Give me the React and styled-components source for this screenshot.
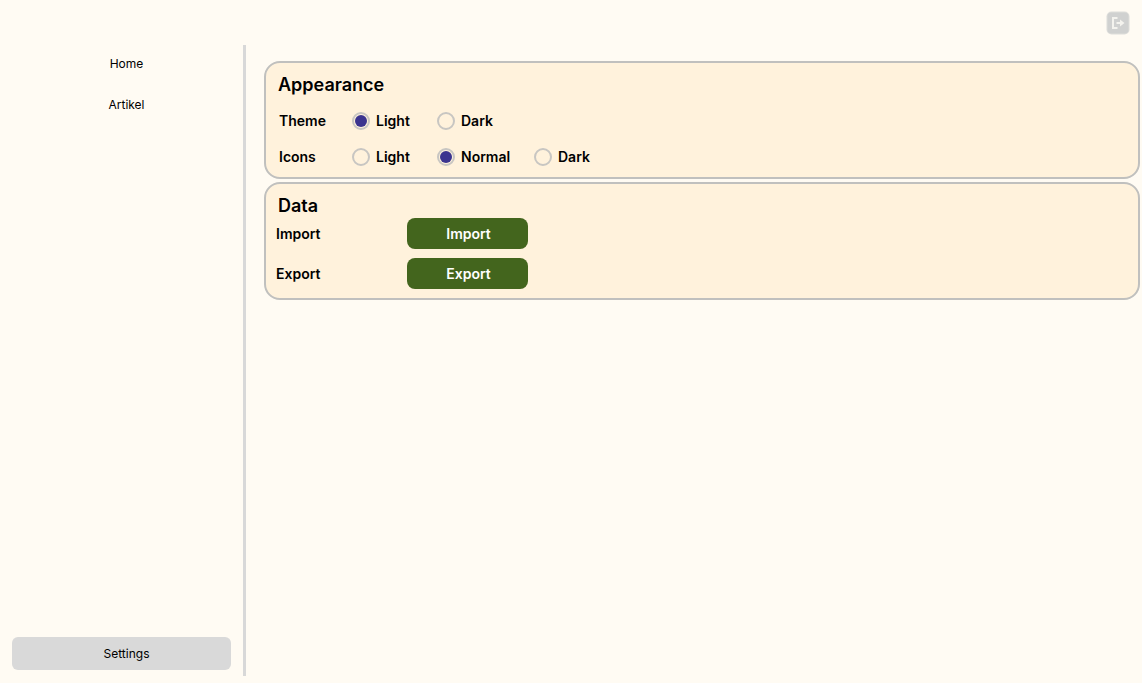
import React, { useState } from "react";
import styled, { createGlobalStyle } from "styled-components";

const GlobalStyle = createGlobalStyle`
  *, *::before, *::after { box-sizing: border-box; }
  body {
    margin: 0;
    background: #fffbf3;
    color: #000;
    font-family: Inter, "Liberation Sans", sans-serif;
  }
`;

const Page = styled.div`
  display: flex;
  flex-direction: column;
  min-height: 100vh;
  padding-bottom: 7px;
`;

const TopBar = styled.header`
  display: flex;
  justify-content: flex-end;
  align-items: center;
  height: 45px;
  padding-right: 12px;
`;

const LogoutButton = styled.button`
  display: block;
  border: 0;
  padding: 0;
  background: none;
  cursor: pointer;

  svg { display: block; }
`;

const Body = styled.div`
  display: flex;
  flex: 1;
`;

const Sidebar = styled.nav`
  display: flex;
  flex-direction: column;
  gap: 8px;
  width: 246px;
  flex-shrink: 0;
  padding: 2px 12px 6px;
  border-right: 3px solid #d8d8d8;
`;

const NavLink = styled.a`
  display: block;
  width: 219px;
  padding-left: 10px;
  border-radius: 6px;
  background: ${(p) => (p.$active ? "#d9d9d9" : "transparent")};
  margin-top: ${(p) => (p.$bottom ? "auto" : "0")};
  color: #000;
  font-size: 12px;
  line-height: 33px;
  text-align: center;
  text-decoration: none;
`;

const Main = styled.main`
  display: flex;
  flex-direction: column;
  gap: 3px;
  flex: 1;
  padding: 16px 2px 0 18px;
`;

const Card = styled.section`
  min-height: 118px;
  padding: 10px 12px 2px;
  border: 2px solid #c0c0be;
  border-radius: 16px;
  background: #fff2dc;
`;

const CardTitle = styled.h2`
  margin: 0;
  font-size: 18px;
  font-weight: 600;
  line-height: 24px;
`;

const ChoiceRow = styled.div`
  display: grid;
  grid-template-columns: 73px 85px 97px auto;
  justify-content: start;
  align-items: center;
  height: 36px;
  padding-left: 1px;
  font-size: 14px;
  font-weight: 600;
  line-height: 18px;
`;

const Choices = styled.div`
  padding-top: 6px;
`;

const Option = styled.label`
  display: flex;
  align-items: center;
  gap: 6px;
  cursor: pointer;
`;

const Radio = styled.input`
  appearance: none;
  width: 18px;
  height: 18px;
  margin: 0;
  border: 2px solid #c8c6c2;
  border-radius: 50%;
  background: transparent;

  &:checked {
    padding: 1px;
    background: #3b348f content-box;
  }
`;

const Actions = styled.div`
  display: grid;
  gap: 9px;
`;

const ActionRow = styled.div`
  display: grid;
  grid-template-columns: 131px 121px;
  align-items: center;
  margin-left: -2px;
  font-size: 14px;
  font-weight: 600;
  line-height: 18px;
`;

const ActionButton = styled.button`
  height: 31px;
  border: 0;
  border-radius: 8px;
  padding: 0 0 0 2px;
  background: #43651d;
  color: #fff;
  font: inherit;
  cursor: pointer;
`;

function ChoiceGroup({ label, name, options, initial }) {
  const [value, setValue] = useState(initial);
  return (
    <ChoiceRow role="radiogroup" aria-labelledby={`${name}-label`}>
      <span id={`${name}-label`}>{label}</span>
      {options.map((option) => (
        <Option key={option}>
          <Radio
            type="radio"
            name={name}
            value={option}
            checked={value === option}
            onChange={() => setValue(option)}
          />
          {option}
        </Option>
      ))}
    </ChoiceRow>
  );
}

function LogoutIcon() {
  return (
    <svg width="24" height="24" viewBox="0 0 24 24" fill="none" aria-hidden="true">
      <rect x="0.5" y="0.5" width="23" height="23" rx="5" fill="#dededb" />
      <rect x="1.5" y="1.5" width="21" height="21" rx="4" fill="#d0d1d0" />
      <path d="M11.5 7H7v10h4.5" stroke="#f4f3ee" strokeWidth="2" />
      <path d="M10.5 12H15" stroke="#f4f3ee" strokeWidth="2" />
      <path d="M14 8.5L18.5 12L14 15.5Z" fill="#f4f3ee" />
    </svg>
  );
}

export default function App() {
  return (
    <Page>
      <GlobalStyle />
      <TopBar>
        <LogoutButton type="button" aria-label="Log out">
          <LogoutIcon />
        </LogoutButton>
      </TopBar>
      <Body>
        <Sidebar>
          <NavLink href="#home">Home</NavLink>
          <NavLink href="#artikel">Artikel</NavLink>
          <NavLink href="#settings" $active $bottom aria-current="page">
            Settings
          </NavLink>
        </Sidebar>
        <Main>
          <Card>
            <CardTitle>Appearance</CardTitle>
            <Choices>
              <ChoiceGroup label="Theme" name="theme" options={["Light", "Dark"]} initial="Light" />
              <ChoiceGroup label="Icons" name="icons" options={["Light", "Normal", "Dark"]} initial="Normal" />
            </Choices>
          </Card>
          <Card>
            <CardTitle>Data</CardTitle>
            <Actions>
              {["Import", "Export"].map((action) => (
                <ActionRow key={action}>
                  <span>{action}</span>
                  <ActionButton type="button">{action}</ActionButton>
                </ActionRow>
              ))}
            </Actions>
          </Card>
        </Main>
      </Body>
    </Page>
  );
}
